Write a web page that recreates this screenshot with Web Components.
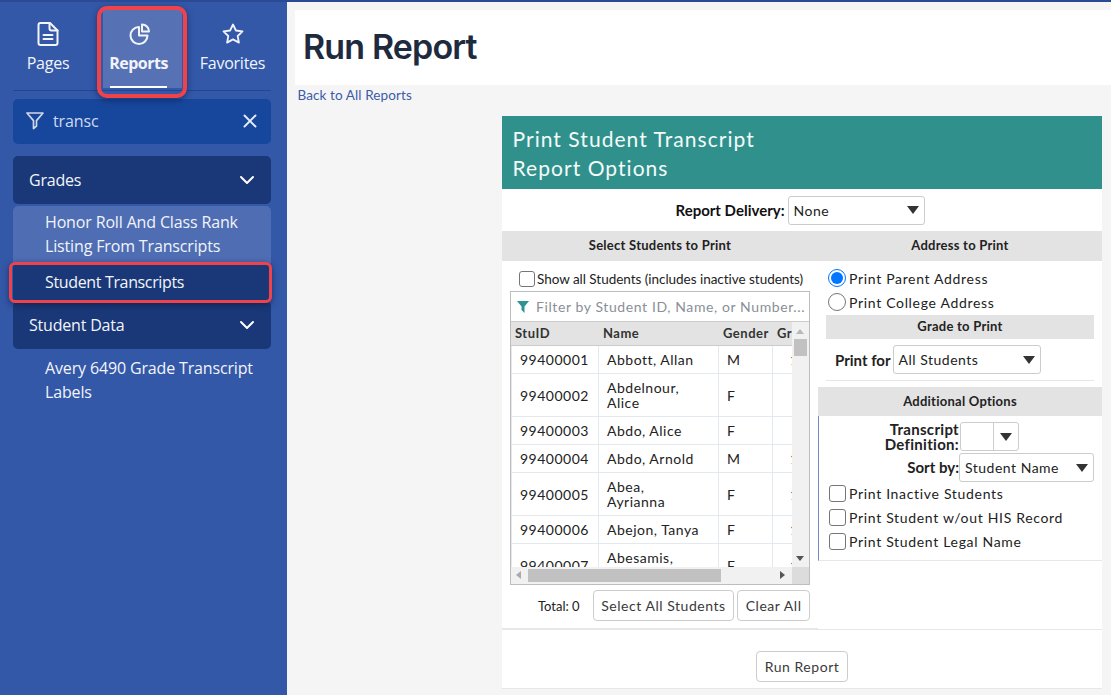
<!DOCTYPE html>
<html>
<head>
<meta charset="utf-8">
<title>Run Report</title>
<style>
  html, body { margin: 0; height: 100%; overflow: hidden; }
  body { display: flex; background: #f5f5f5; font-family: Lato, "Liberation Sans", sans-serif; }
</style>
</head>
<body>
<side-nav></side-nav>
<report-page></report-page>

<script>
class NavTab extends HTMLElement {
  constructor() {
    super();
    this.root = this.attachShadow({ mode: "open" });
    const active = this.hasAttribute("active");
    this.root.innerHTML = `
      <style>
        :host { display: block; height: 78px; position: relative; color: #f2f4fa; box-sizing: border-box; }
        .box { height: 100%; display: flex; flex-direction: column; align-items: center; padding-top: 10px; box-sizing: border-box; background: ${active ? "#5672b5" : "transparent"}; ${active ? "padding-right: 8px;" : ""} }
        span { margin-top: 5px; font: ${active ? 700 : 400} 16px/20px "Open Sans", Lato, sans-serif; letter-spacing: ${active ? "-0.5px" : "-0.25px"}; white-space: nowrap; }
        i { position: absolute; left: 7px; right: 15px; bottom: 0; height: 2px; background: #fff; }
        b { position: absolute; left: -6px; right: -5px; top: -4px; bottom: -10px; border: 4px solid #f0424a; border-radius: 10px; box-shadow: 0 2px 6px rgba(10,20,60,.55); }
      </style>
      <div class="box"><slot name="icon"></slot><span><slot></slot></span></div>
      ${active ? "<i></i><b></b>" : ""}`;
  }
}

class NavGroup extends HTMLElement {
  constructor() {
    super();
    this.root = this.attachShadow({ mode: "open" });
    this.root.innerHTML = `
      <style>
        :host { display: block; }
        .head { height: 48px; box-sizing: border-box; display: flex; align-items: center; justify-content: space-between; padding: 0 16px; background: #1a3877; border-radius: 5px; color: #f2f4fa; font: 400 16px "Open Sans", Lato, sans-serif; letter-spacing: -0.2px; }
        svg { width: 16px; height: 10px; fill: none; stroke: #fff; stroke-width: 2; stroke-linecap: round; stroke-linejoin: round; }
      </style>
      <div class="head"><span><slot name="label"></slot></span>
        <svg viewBox="0 0 16 10"><path d="M2 2l6 6 6-6"/></svg></div>
      <slot></slot>`;
  }
}

class NavLink extends HTMLElement {
  constructor() {
    super();
    this.root = this.attachShadow({ mode: "open" });
    const kind = this.getAttribute("kind") || "plain";
    const bg = { plain: "transparent", hover: "#4f6db3", current: "#1a3877" }[kind];
    const pad = { plain: "5px 16px 5px 32px", hover: "4px 16px 5px 32px", current: "5px 16px 7px 32px" }[kind];
    this.root.innerHTML = `
      <style>
        :host { display: block; position: relative; }
        div { background: ${bg}; padding: ${pad}; color: #f2f4fa; font: 400 16px/24px "Open Sans", Lato, sans-serif; letter-spacing: ${kind === "current" ? "-0.35px" : "-0.15px"}; border-radius: ${kind === "hover" ? "5px 5px 0 0" : "0"}; }
        b { position: absolute; left: -4px; right: -1px; top: -3px; bottom: -2px; border: 3.5px solid #f0424a; border-radius: 6px; box-shadow: 0 2px 6px rgba(10,20,60,.55); }
      </style>
      <div><slot></slot></div>
      ${kind === "current" ? "<b></b>" : ""}`;
  }
}

class SideNav extends HTMLElement {
  constructor() {
    super();
    this.root = this.attachShadow({ mode: "open" });
    const ic = `viewBox="0 0 28 28" style="width:28px;height:28px;fill:none;stroke:#f2f4fa;stroke-width:2;stroke-linejoin:round;stroke-linecap:round;display:block"`;
    this.root.innerHTML = `
      <style>
        :host { display: block; flex: 0 0 287px; height: 100vh; box-sizing: border-box; background: #3358a8; border-top: 2px solid #2b4a96; }
        .tabs { display: flex; margin: 0 16px 0 13px; padding-top: 8px; height: 80px; border-bottom: 1px solid #1f4796; box-sizing: content-box; }
        .p1 { width: 70px; margin-right: 20px; }
        .p2 { width: 79px; }
        .p3 { width: 89px; padding-left: 12px; }
        .filter { margin: 8px 16px 12px 13px; height: 45px; box-sizing: border-box; display: flex; align-items: center; background: #17479c; border-radius: 5px; padding: 0 14px 2px 13px; color: #cfdaf0; font: 400 16px "Open Sans", Lato, sans-serif; }
        .filter span { flex: 1; margin-left: 9px; letter-spacing: -.1px; }
        .filter svg { fill: none; stroke: #cfd6e6; stroke-width: 1.7; stroke-linejoin: round; stroke-linecap: round; }
        .groups { margin: 0 16px 0 13px; }
        .gap { height: 2px; }
        .tail { padding-top: 2px; }
      </style>
      <div class="tabs">
        <nav-tab class="p1">Pages<svg slot="icon" ${ic}><path d="M4.5 5a2 2 0 0 1 2-2h9.5l7.5 7.5V23a2 2 0 0 1-2 2h-15a2 2 0 0 1-2-2z"/><path d="M15.5 3v5.5a2 2 0 0 0 2 2h6M9.5 15h9M9.5 19h9"/></svg></nav-tab>
        <nav-tab class="p2" active>Reports<svg slot="icon" ${ic}><path d="M14 7a8.5 8.5 0 1 0 8.5 8.5H14z"/><path d="M17 4.5a7 7 0 0 1 7 7h-7z"/></svg></nav-tab>
        <nav-tab class="p3">Favorites<svg slot="icon" ${ic}><path d="M14 4.5l2.9 6 6.6.9-4.8 4.6 1.2 6.6-5.9-3.2-5.9 3.2 1.2-6.6-4.8-4.6 6.6-.9z" stroke-width="1.8"/></svg></nav-tab>
      </div>
      <div class="filter">
        <svg width="18" height="19" viewBox="0 0 18 19"><path d="M1 2h16l-6.5 7.6V15L7.5 17.5V9.6z"/></svg>
        <span>transc</span>
        <svg width="14" height="14" viewBox="0 0 14 14" style="stroke:#e8ecf5;stroke-width:1.9"><path d="M1.5 1.5l11 11M12.5 1.5l-11 11"/></svg>
      </div>
      <div class="groups">
        <nav-group><span slot="label">Grades</span>
          <div class="gap"></div>
          <nav-link kind="hover">Honor Roll And Class Rank Listing From Transcripts</nav-link>
          <div class="gap"></div>
          <nav-link kind="current">Student Transcripts</nav-link>
        </nav-group>
        <nav-group><span slot="label">Student Data</span>
          <div class="tail"></div>
          <nav-link>Avery 6490 Grade Transcript Labels</nav-link>
        </nav-group>
      </div>`;
  }
}

class SectionBar extends HTMLElement {
  constructor() {
    super();
    this.root = this.attachShadow({ mode: "open" });
    this.root.innerHTML = `
      <style>
        :host { display: block; background: #e2e3e2; color: #222; text-align: center; font: 700 13px/28px Lato, sans-serif; letter-spacing: .25px; padding-bottom: 2px; }
      </style>
      <slot></slot>`;
  }
}

class FakeSelect extends HTMLElement {
  constructor() {
    super();
    this.root = this.attachShadow({ mode: "open" });
    const split = this.hasAttribute("split");
    this.root.innerHTML = `
      <style>
        :host { display: inline-flex; align-items: center; box-sizing: border-box; height: 29px; background: #fff; border: 1px solid #ccc; border-radius: 3px; color: #222; font: 400 14px Lato, sans-serif; letter-spacing: .5px; padding-left: ${split ? 0 : 5}px; }
        span { flex: 1; white-space: nowrap; }
        i { display: block; width: 0; height: 0; border: 6px solid transparent; border-top: 8px solid #333; border-bottom: 0; margin: 0 5px 0 5px; }
        .cell { ${split ? "border-left: 1px solid #ccc; height: 100%; display: flex; align-items: center; padding: 0 1px;" : ""} }
      </style>
      <span><slot></slot></span><div class="cell"><i></i></div>`;
  }
}

class CheckRow extends HTMLElement {
  constructor() {
    super();
    this.root = this.attachShadow({ mode: "open" });
    const radio = this.getAttribute("type") === "radio";
    const on = this.hasAttribute("checked");
    const small = this.hasAttribute("small");
    const size = radio ? 18 : small ? 16 : 17;
    this.root.innerHTML = `
      <style>
        :host { display: flex; align-items: center; height: 24px; color: #222; font: 400 14px Lato, sans-serif; letter-spacing: ${small ? "-.03px" : ".68px"}; white-space: nowrap; }
        .c { box-sizing: border-box; width: ${size}px; height: ${size}px; margin-right: ${small ? 2 : 3}px; background: #fff; border: 1px solid #767676; border-radius: ${radio ? "50%" : "3px"}; flex: none; }
        .on { border: 1px solid #0075ff; padding: 2px; }
        .on::before { content: ""; display: block; width: 12px; height: 12px; border-radius: 50%; background: #0075ff; }
      </style>
      <div class="c ${on ? "on" : ""}"></div><slot></slot>`;
  }
}

class PlainButton extends HTMLElement {
  constructor() {
    super();
    this.root = this.attachShadow({ mode: "open" });
    this.root.innerHTML = `
      <style>
        :host { display: inline-block; box-sizing: border-box; height: 31px; padding: 0 7.5px; background: #fff; border: 1px solid #ccc; border-radius: 4px; color: #3a3a3a; font: 400 14px/29px Lato, sans-serif; letter-spacing: .54px; white-space: nowrap; }
      </style>
      <slot></slot>`;
  }
}

const students = [
  ["99400001", "Abbott, Allan", "M", "12", 28],
  ["99400002", "Abdelnour,<br>Alice", "F", "", 43],
  ["99400003", "Abdo, Alice", "F", "", 28],
  ["99400004", "Abdo, Arnold", "M", "12", 28],
  ["99400005", "Abea,<br>Ayrianna", "F", "11", 43],
  ["99400006", "Abejon, Tanya", "F", "12", 28],
  ["99400007", "Abesamis,<br>Anne", "F", "11", 43],
];

class StudentGrid extends HTMLElement {
  constructor() {
    super();
    this.root = this.attachShadow({ mode: "open" });
    const rows = students.map(s => `
      <div class="row" style="height:${s[4]}px">
        <div class="id">${s[0]}</div><div class="nm">${s[1]}</div><div class="g">${s[2]}</div><div class="gr">${s[3]}</div>
      </div>`).join("");
    this.root.innerHTML = `
      <style>
        :host { display: block; width: 300px; height: 294px; box-sizing: border-box; border: 1px solid #bdbdbd; background: #fff; color: #222; font: 400 14px/15px Lato, sans-serif; letter-spacing: .5px; }
        .filter { border-bottom: 1px solid #ccc; box-sizing: border-box; height: 30px; display: flex; align-items: center; padding-left: 6px; gap: 7px; color: #8a8f98; white-space: nowrap; overflow: hidden; letter-spacing: .6px; }
        .filter svg { flex: none; }
        .body { display: grid; grid-template-columns: 281px 17px; grid-template-rows: 245px 17px; }
        .view { overflow: hidden; }
        .row, .hd { display: grid; grid-template-columns: 88px 120px 54px 60px; width: 322px; }
        .hd { height: 24px; background: #e2e3e2; border-bottom: 1px solid #ccc; box-sizing: border-box; font-weight: 700; font-size: 13px; line-height: 22px; color: #333; letter-spacing: .5px; }
        .hd div { padding-left: 4px; }
        .row { box-sizing: border-box; border-bottom: 1px solid #e3e9ee; }
        .row > div { display: flex; align-items: center; padding-left: 8px; border-right: 1px solid #e3e9ee; box-sizing: border-box; }
        .row > .id { border-left: 1px solid #e3e9ee; }
        .row > .gr { padding-left: 17px; color: #444; }
        .v, .h { background: #f1f1f1; position: relative; }
        .up, .dn, .lf, .rt { position: absolute; width: 0; height: 0; border: 4px solid transparent; }
        .up { top: 7px; left: 4px; border-bottom: 5px solid #b8b8b8; border-top: 0; }
        .dn { bottom: 6px; left: 4px; border-top: 5px solid #555; border-bottom: 0; }
        .thumb-v { position: absolute; left: 2px; right: 2px; top: 17px; height: 17px; background: #c1c1c1; }
        .lf { top: 4px; left: 5px; border-right: 5px solid #aaa; border-left: 0; }
        .rt { top: 4px; right: 7px; border-left: 5px solid #555; border-right: 0; }
        .thumb-h { position: absolute; left: 17px; width: 193px; top: 2px; bottom: 2px; background: #c1c1c1; }
        .corner { background: #dcdcdc; }
      </style>
      <div class="filter">
        <svg width="12" height="13" viewBox="0 0 12 13"><path d="M0 1h12L7.5 6.5V13L4.5 10V6.5z" fill="#2f9490"/></svg>
        <span>Filter by Student ID, Name, or Number...</span>
      </div>
      <div class="body">
        <div class="view">
          <div class="hd"><div>StuID</div><div>Name</div><div>Gender</div><div>Grade</div></div>
          ${rows}
        </div>
        <div class="v"><div class="up"></div><div class="thumb-v"></div><div class="dn"></div></div>
        <div class="h"><div class="lf"></div><div class="thumb-h"></div><div class="rt"></div></div>
        <div class="corner"></div>
      </div>`;
  }
}

class ReportCard extends HTMLElement {
  constructor() {
    super();
    this.root = this.attachShadow({ mode: "open" });
    this.root.innerHTML = `
      <style>
        :host { display: block; width: 600px; background: #fff; color: #222; font-family: Lato, sans-serif; }
        .title { background: #30918c; color: #f4fbfa; font: 400 21px/29px Lato, sans-serif; letter-spacing: 1.05px; padding: 8px 10.5px 6px; height: 73px; box-sizing: border-box; }
        .delivery { height: 42px; display: flex; align-items: center; justify-content: center; gap: 3px; font: 700 15px Lato, sans-serif; color: #111; padding-right: 4px; }
        .delivery fake-select { width: 137px; }
        .cols { display: grid; grid-template-columns: 316px 284px; height: 399px; }
        .left { border-bottom: 2px solid #e6e8e8; box-sizing: border-box; }
        .right { border-bottom: 1px solid #e6e8e8; box-sizing: border-box; }
        .show { display: flex; padding: 6px 0 0 17px; height: 22px; box-sizing: border-box; }
        .show check-row { font-size: 13.5px; }
        .left student-grid { margin: 8px 0 0 8px; }
        .totals { display: flex; align-items: center; justify-content: flex-end; margin: 5px 8px 0 0; gap: 3px; }
        .totals span { font-size: 13px; margin-right: 10px; }
        .addr { padding: 5px 0 1px 10px; }
        .grade { margin-left: 8px; width: 268px; }
        .grade section-bar { line-height: 23px; padding-bottom: 1px; }
        .printfor { margin: 0 0 6px 8px; width: 268px; height: 42px; box-sizing: border-box; display: flex; align-items: center; gap: 2px; padding: 0 0 0 9px; border-bottom: 1px solid #e6e8e8; font: 700 15px Lato, sans-serif; color: #222; }
        .printfor fake-select { width: 148px; }
        .extra { border-left: 1px solid #6d8cc0; border-bottom: 1px solid #e6e8e8; height: 145px; padding-top: 6px; box-sizing: border-box; }
        .opt { display: grid; grid-template-columns: 140px auto; column-gap: 1px; align-items: center; font: 700 15px/15px Lato, sans-serif; text-align: right; color: #222; }
        .opt + .opt { margin-top: 2px; }
        .opt fake-select { justify-self: start; text-align: left; font-weight: 400; }
        .def { margin-bottom: -1px; letter-spacing: .3px; }
        .checks { padding-left: 10px; margin-top: -1px; }
        .bar-foot { display: flex; justify-content: center; padding-top: 21px; border-bottom: 1px solid #e6e8e8; height: 59px; box-sizing: border-box; }
      </style>
      <div class="title">Print Student Transcript<br>Report Options</div>
      <div class="delivery">Report Delivery: <fake-select>None</fake-select></div>
      <div class="cols">
        <div class="left">
          <section-bar>Select Students to Print</section-bar>
          <div class="show"><check-row small>Show all Students (includes inactive students)</check-row></div>
          <student-grid></student-grid>
          <div class="totals"><span>Total: 0</span><plain-button>Select All Students</plain-button><plain-button>Clear All</plain-button></div>
        </div>
        <div class="right">
          <section-bar>Address to Print</section-bar>
          <div class="addr">
            <check-row type="radio" checked>Print Parent Address</check-row>
            <check-row type="radio">Print College Address</check-row>
          </div>
          <div class="grade"><section-bar>Grade to Print</section-bar></div>
          <div class="printfor">Print for <fake-select>All Students</fake-select></div>
          <section-bar style="padding-bottom:1px">Additional Options</section-bar>
          <div class="extra">
            <div class="opt" style="height:29px"><div class="def">Transcript<br>Definition:</div><fake-select split style="width:59px"></fake-select></div>
            <div class="opt"><div>Sort by:</div><fake-select style="width:135px;margin-left:-1px">Student Name</fake-select></div>
            <div class="checks">
              <check-row>Print Inactive Students</check-row>
              <check-row>Print Student w/out HIS Record</check-row>
              <check-row>Print Student Legal Name</check-row>
            </div>
          </div>
        </div>
      </div>
      <div class="bar-foot"><plain-button>Run Report</plain-button></div>`;
  }
}

class ReportPage extends HTMLElement {
  constructor() {
    super();
    this.root = this.attachShadow({ mode: "open" });
    this.root.innerHTML = `
      <style>
        :host { display: block; flex: 1; min-width: 0; height: 100vh; border-top: 2px solid #2b4a96; box-sizing: border-box; }
        .head { margin: 8px 0 0 8px; height: 75px; box-sizing: border-box; background: #fff; padding: 15px 0 0 8px; }
        h1 { margin: 0; font: 600 34px/44px Inter, sans-serif; color: #1e2a3e; letter-spacing: -.85px; }
        a { display: block; margin: 1px 0 0 10.5px; font: 400 13.5px/18px Lato, sans-serif; color: #3c5ba9; letter-spacing: .1px; }
        report-card { margin: 12px 9px 0 215px; }
      </style>
      <div class="head"><h1>Run Report</h1></div>
      <a>Back to All Reports</a>
      <report-card></report-card>`;
  }
}

customElements.define("nav-tab", NavTab);
customElements.define("nav-group", NavGroup);
customElements.define("nav-link", NavLink);
customElements.define("side-nav", SideNav);
customElements.define("section-bar", SectionBar);
customElements.define("fake-select", FakeSelect);
customElements.define("check-row", CheckRow);
customElements.define("plain-button", PlainButton);
customElements.define("student-grid", StudentGrid);
customElements.define("report-card", ReportCard);
customElements.define("report-page", ReportPage);
</script>
</body>
</html>
